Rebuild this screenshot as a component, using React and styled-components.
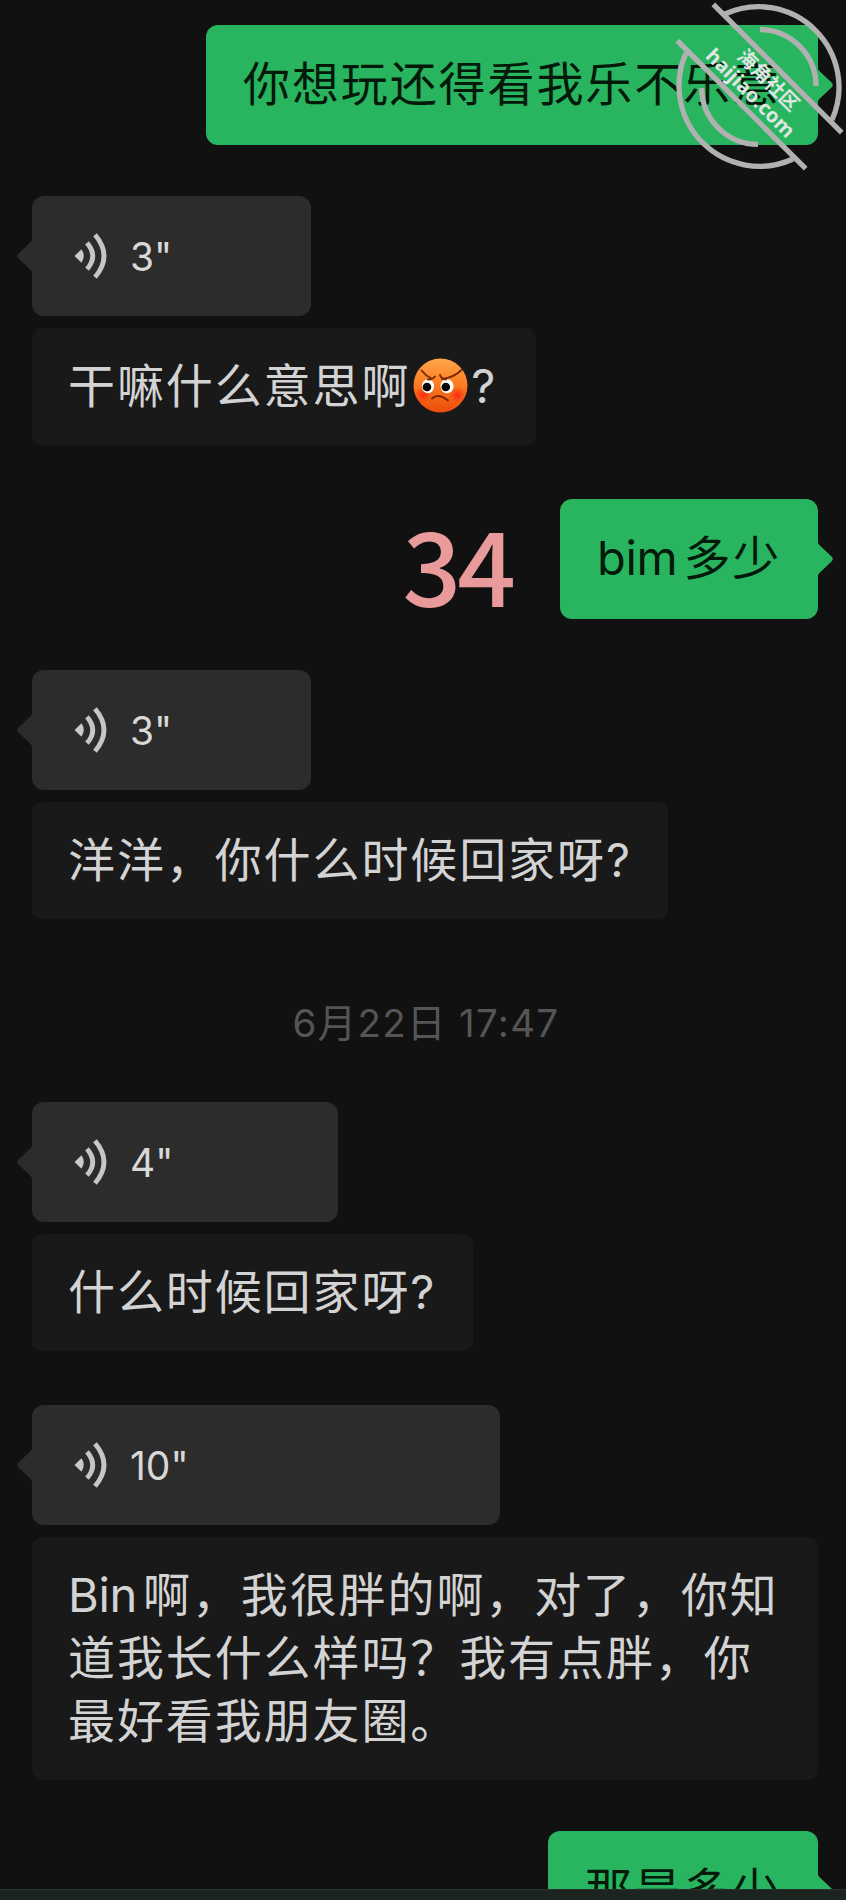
import styled, { createGlobalStyle, css } from "styled-components";

const GlobalStyle = createGlobalStyle`
  * {
    box-sizing: border-box;
    margin: 0;
    padding: 0;
  }

  body {
    background-color: #111111;
    font-family: Inter, "Noto Sans CJK SC", sans-serif;
  }
`;

const Screen = styled.div`
  display: flex;
  flex-direction: column;
  position: relative;
  width: 846px;
  height: 1900px;
  overflow: hidden;
  background-color: #111111;
`;

const Chat = styled.main`
  flex: 1;
  min-height: 0;
  overflow: hidden;
  display: flex;
  flex-direction: column;
  padding: 25px 28px 0 32px;
`;

const Row = styled.div`
  flex-shrink: 0;
  display: flex;
  align-items: center;
  justify-content: ${(props) => (props.$mine ? "flex-end" : "flex-start")};
  margin-bottom: ${(props) => props.$gap || 0}px;
`;

const messageText = css`
  font-size: 47px;
  line-height: 63px;
  letter-spacing: 1.9px;
  white-space: nowrap;
`;

const Bubble = styled.div`
  ${messageText}
  position: relative;
  display: flex;
  align-items: center;
  width: ${(props) => props.$width}px;
  height: 120px;
  padding: 0 0 3px 37px;
  border-radius: 12px;
  background-color: #29b560;
  color: #03190a;
`;

const VoiceBubble = styled.div`
  position: relative;
  display: flex;
  align-items: center;
  gap: 23px;
  width: ${(props) => props.$width}px;
  height: 120px;
  padding-left: 42px;
  border-radius: 12px;
  background-color: #2c2c2c;
  color: #d8d8d8;
  font-size: 39px;
`;

const Tail = styled.svg`
  position: absolute;
  top: 43px;
  width: 16px;
  height: 34px;
  ${(props) =>
    props.$mine
      ? css`
          right: -15px;
          fill: #29b560;
          transform: scaleX(-1);
        `
      : css`
          left: -15px;
          fill: #2c2c2c;
        `}
`;

const Transcript = styled.div`
  ${messageText}
  width: ${(props) => props.$width}px;
  padding: 26px 0 28px 36px;
  border-radius: 10px;
  background-color: #191919;
  color: #d3d3d3;
`;

const Latin = styled.span`
  letter-spacing: -0.3px;
  margin-right: ${(props) => props.$gap}px;
`;

const Emoji = styled.svg`
  display: inline-block;
  width: 55px;
  height: 55px;
  margin: 0 3px 0 3px;
  vertical-align: -10px;
`;

const Scribble = styled.span`
  margin-right: 48px;
  padding-top: 7px;
  color: #e99a9b;
  font-family: "Noto Sans CJK SC", sans-serif;
  font-size: 103px;
  font-weight: 500;
  letter-spacing: -4px;
  line-height: 113px;
`;

const Time = styled.time`
  flex-shrink: 0;
  align-self: center;
  height: 60px;
  margin: 74px 0 49px;
  padding-left: 2px;
  color: #555555;
  font-size: 38.5px;
  letter-spacing: 1.3px;
  line-height: 60px;
`;

const Footer = styled.footer`
  flex-shrink: 0;
  height: 11px;
  border-top: 1px solid #2a322e;
  background-color: #1c2420;
`;

const Watermark = styled.svg`
  position: absolute;
  top: 0;
  right: 0;
  width: 176px;
  height: 180px;
`;

const WatermarkText = styled.text`
  fill: #dfe6e1;
  font-family: "Noto Sans", "Noto Sans CJK SC", sans-serif;
  font-size: ${(props) => props.$size}px;
  font-weight: 700;
  text-anchor: middle;
`;

function BubbleTail({ mine }) {
  return (
    <Tail $mine={mine} viewBox="0 0 16 34">
      <path d="M16 0 L15 1 Q14 3 11 5.500 L1.500 14.500 Q-1 17 1.500 19.500 L11 28.500 Q14 31 15 33 L16 34 Z" />
    </Tail>
  );
}

function VoiceIcon() {
  return (
    <svg width="33" height="46" viewBox="0 0 33 46" fill="none">
      <path d="M0.500 23 L7.500 16.300 Q12 23 7.500 29.700 Z" fill="#cacaca" />
      <path d="M13 9.800 Q24.500 23 13 36.200" stroke="#c6c6c6" strokeWidth="4.800" />
      <path d="M21 1.800 Q39 23 21 44.200" stroke="#c6c6c6" strokeWidth="4.800" />
    </svg>
  );
}

function Voice({ seconds, width }) {
  return (
    <Row $gap={12}>
      <VoiceBubble $width={width}>
        <BubbleTail />
        <VoiceIcon />
        {seconds}"
      </VoiceBubble>
    </Row>
  );
}

function AngryFace() {
  return (
    <Emoji viewBox="0 0 55 55">
      <defs>
        <linearGradient id="face" x1="0" y1="0" x2="0" y2="1">
          <stop offset="0" stopColor="#ffa64a" />
          <stop offset="0.5" stopColor="#fb7a20" />
          <stop offset="1" stopColor="#ea4c0c" />
        </linearGradient>
        <radialGradient id="cheek">
          <stop offset="0" stopColor="#ff2a12" />
          <stop offset="1" stopColor="#ff2a12" stopOpacity="0" />
        </radialGradient>
      </defs>
      <circle cx="27.5" cy="27.5" r="27" fill="url(#face)" />
      <circle cx="10" cy="37" r="8" fill="url(#cheek)" />
      <circle cx="44.5" cy="37" r="8" fill="url(#cheek)" />
      <ellipse cx="15" cy="28.3" rx="6" ry="7" fill="#ffffff" />
      <ellipse cx="34" cy="28.3" rx="6.5" ry="7" fill="#ffffff" />
      <circle cx="14" cy="29" r="4.3" fill="#050505" />
      <circle cx="32.8" cy="29" r="4.3" fill="#050505" />
      <g fill="none" stroke="#7c2606" strokeWidth="1.9" strokeLinecap="round">
        <path d="M8.500 12.500 Q13 18 18.500 20.500 M15 21.500 Q19 22 22 18.500" />
        <path d="M48.500 12 Q41 19.500 29 21 M27 17 Q28 20.500 33 21.500" />
        <path d="M19 40.500 Q25 34.500 35 42.500" />
      </g>
    </Emoji>
  );
}

function SiteWatermark() {
  return (
    <Watermark viewBox="670 0 176 180">
      <g fill="none" stroke="#b1b1b1" strokeWidth="5.3">
        <path d="M713.300 4.300 L841.700 132.700 M677.300 40.700 L805.700 168.700" />
        <path d="M725 14 A80.500 80.500 0 0 1 832 120" />
        <path d="M686 53 A80.500 80.500 0 0 0 793 159" />
        <path d="M760 29.500 A56.500 56.500 0 0 1 816 86" />
        <path d="M701.700 88 A56.500 56.500 0 0 0 758 144.300" />
      </g>
      <WatermarkText $size={19.5} transform="translate(763.5 85) rotate(45)">
        海角社区
      </WatermarkText>
      <WatermarkText
        $size={20}
        textLength="116"
        transform="translate(745.5 98) rotate(45)"
      >
        haijiao.com
      </WatermarkText>
    </Watermark>
  );
}

export default function App() {
  return (
    <>
      <GlobalStyle />
      <Screen>
        <Chat>
          <Row $mine $gap={51}>
            <Bubble $width={612}>
              你想玩还得看我乐不乐意
              <BubbleTail mine />
            </Bubble>
          </Row>

          <Voice seconds={3} width={279} />
          <Row $gap={54}>
            <Transcript $width={504}>
              干嘛什么意思啊
              <AngryFace />?
            </Transcript>
          </Row>

          <Row $mine $gap={51}>
            <Scribble>34</Scribble>
            <Bubble $width={258}>
              <Latin $gap={6}>bim</Latin>多少
              <BubbleTail mine />
            </Bubble>
          </Row>

          <Voice seconds={3} width={279} />
          <Row>
            <Transcript $width={636}>洋洋，你什么时候回家呀?</Transcript>
          </Row>

          <Time>6月22日 17:47</Time>

          <Voice seconds={4} width={306} />
          <Row $gap={54}>
            <Transcript $width={441}>什么时候回家呀?</Transcript>
          </Row>

          <Voice seconds={10} width={468} />
          <Row $gap={51}>
            <Transcript $width={786}>
              <Latin $gap={6}>Bin</Latin>啊，我很胖的啊，对了，你知
              <br />
              道我长什么样吗？我有点胖，你
              <br />
              最好看我朋友圈。
            </Transcript>
          </Row>

          <Row $mine>
            <Bubble $width={270}>
              那是多少
              <BubbleTail mine />
            </Bubble>
          </Row>
        </Chat>
        <Footer />
        <SiteWatermark />
      </Screen>
    </>
  );
}
